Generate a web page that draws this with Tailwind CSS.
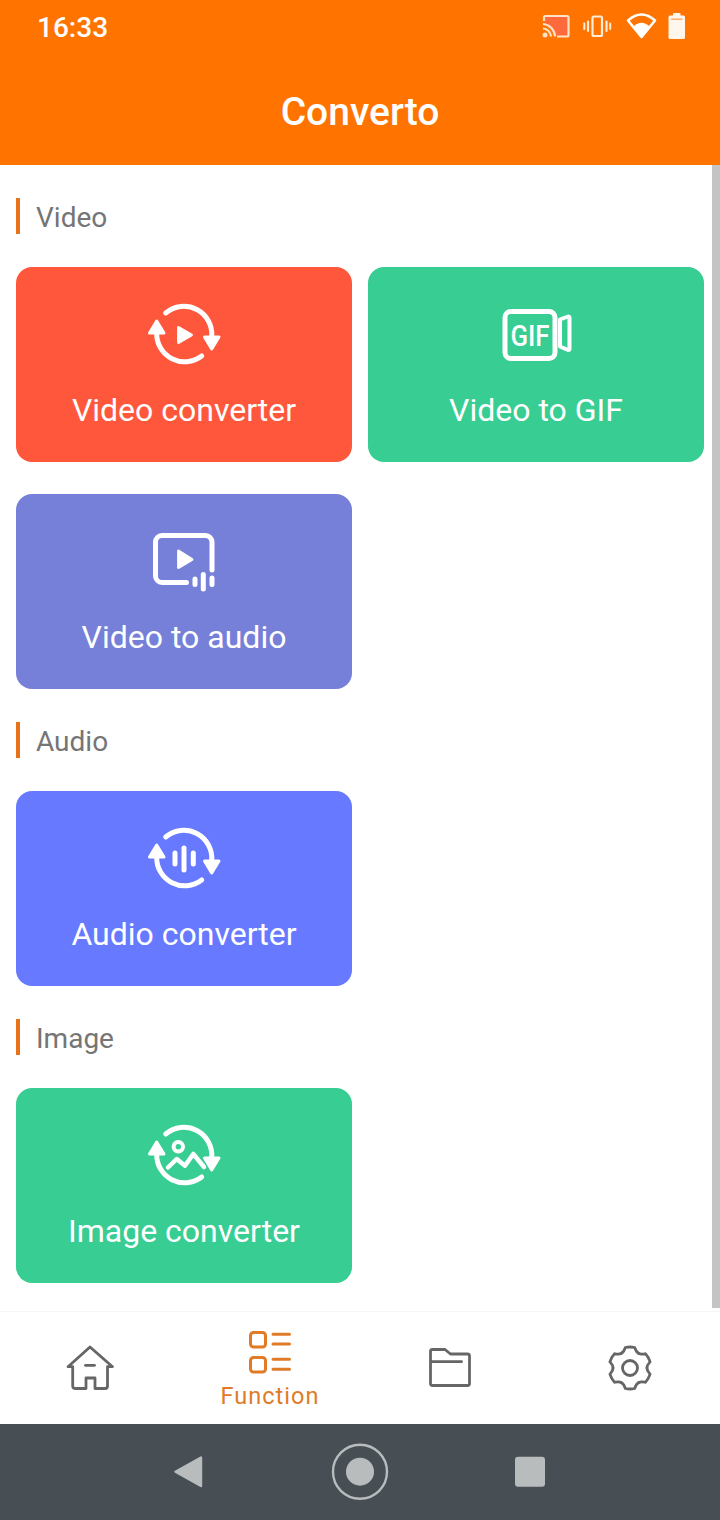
<!DOCTYPE html>
<html lang="en">
<head>
  <meta charset="UTF-8" />
  <title>Converto</title>
  <script src="https://cdn.jsdelivr.net/npm/@tailwindcss/browser@4"></script>
</head>
<body class="bg-white font-[Roboto,sans-serif]">
  <svg class="hidden" width="0" height="0">
    <defs>
      <!-- two arrows shared by the converter cards -->
      <symbol id="cycle" viewBox="0 0 80 80">
        <path d="M21.7 18A28 28 0 0 1 67.7 42" fill="none" stroke="white" stroke-width="5" stroke-linecap="round"/>
        <path d="M12.7 38A28 28 0 0 0 57.7 61" fill="none" stroke="white" stroke-width="5" stroke-linecap="round"/>
        <path d="M5.5 38 12.700 26 20 38Z" fill="white" stroke="white" stroke-width="3" stroke-linejoin="round"/>
        <path d="M60.5 42 67.7 54 75 42Z" fill="white" stroke="white" stroke-width="3" stroke-linejoin="round"/>
      </symbol>
    </defs>
  </svg>

  <div class="relative w-[720px] h-[1520px] flex flex-col overflow-hidden">
    <!-- header -->
    <header class="h-[165px] bg-[#ff7300] text-white shrink-0 flex flex-col">
      <div class="h-[54px] pl-[37px] pr-[35px] flex items-center justify-between">
        <span class="text-[28px] leading-none font-medium mt-px">16:33</span>
        <svg width="150" height="54" viewBox="535 0 150 54" class="-mt-[1px]">
          <!-- cast -->
          <path d="M544 21V17.5A1.5 1.5 0 0 1 545.5 16H567A1.5 1.5 0 0 1 568.5 17.5V35A1.5 1.5 0 0 1 567 36.5H557" fill="#ff6a3c" stroke="#ffe3c8" stroke-width="2.2"/>
          <path d="M543 24A13 13 0 0 1 555 36.5M543 28.5A8.5 8.5 0 0 1 551 36.5" fill="none" stroke="#ffe3c8" stroke-width="2.2"/>
          <circle cx="545" cy="35" r="2.5" fill="#ffe3c8"/>
          <!-- vibrate -->
          <rect x="592.5" y="16.5" width="9.5" height="19.5" rx="1.5" fill="none" stroke="#ffedd8" stroke-width="2.2"/>
          <path d="M588 21.5V31M606.5 21.5V31" stroke="#ffedd8" stroke-width="2.2" stroke-linecap="round"/>
          <path d="M584.3 23.5V29M610.2 23.5V29" stroke="#ffedd8" stroke-width="2" stroke-linecap="round"/>
          <!-- wifi -->
          <path d="M628 20.5Q641.5 8.5 655 20.5L641.5 37Z" fill="none" stroke="white" stroke-width="2.6" stroke-linejoin="round"/>
          <path d="M633.5 26.5Q641.5 19 649.5 26.5L641.5 37Z" fill="white"/>
          <!-- battery -->
          <path d="M673 14.500A1 1 0 0 1 674 13H679.5A1 1 0 0 1 680.5 14.5V15.5H683.5A1.5 1.5 0 0 1 685 17V37.5A1.5 1.5 0 0 1 683.5 39H670A1.5 1.5 0 0 1 668.5 37.5V17A1.5 1.5 0 0 1 670 15.5H673Z" fill="#fff6ec"/>
          <rect x="671" y="18.5" width="11.5" height="1.5" fill="#ffb06e"/>
        </svg>
      </div>
      <h1 class="mt-[35px] text-center text-[39px] leading-[46px] font-medium">Converto</h1>
    </header>

    <!-- content -->
    <main class="flex-1 px-4 min-h-0">
      <section class="pt-[33px]">
        <div class="h-9 border-l-4 border-[#e8721c] pl-4 pt-1 flex items-center text-[#757575] text-[28px]">Video</div>
        <div class="mt-[33px] grid grid-cols-2 gap-x-4 gap-y-8">
          <a class="h-[195px] rounded-2xl bg-[#ff573b] flex flex-col items-center text-white pt-7">
            <svg width="80" height="80" viewBox="0 0 80 80">
              <use href="#cycle"/>
              <path d="M34.5 32.5 47.5 40 34.5 47.5Z" fill="white" stroke="white" stroke-width="2.8" stroke-linejoin="round"/>
            </svg>
            <span class="mt-[16px] text-[32px] leading-[38px]">Video converter</span>
          </a>
          <a class="h-[195px] rounded-2xl bg-[#38cd93] flex flex-col items-center text-white pt-7">
            <svg width="80" height="80" viewBox="0 0 80 80">
              <rect x="9" y="16.5" width="50" height="47" rx="6" fill="none" stroke="white" stroke-width="5"/>
              <path d="M64 24.5 72 21.5Q73.5 21.5 73.5 23V53.5Q73.500 55 72 55L64 51.5Z" fill="none" stroke="white" stroke-width="4" stroke-linejoin="round"/>
              <text x="34" y="50.500" fill="white" font-size="29" font-weight="500" text-anchor="middle" textLength="39" lengthAdjust="spacingAndGlyphs">GIF</text>
            </svg>
            <span class="mt-[16px] text-[32px] leading-[38px]">Video to GIF</span>
          </a>
          <a class="h-[195px] rounded-2xl bg-[#7680d9] flex flex-col items-center text-white pt-7">
            <svg width="80" height="80" viewBox="0 0 80 80">
              <path d="M42.5 60.5H18A6.5 6.5 0 0 1 11.5 54V20A6.5 6.5 0 0 1 18 13.5H61.500A6.5 6.5 0 0 1 68 20V48" fill="none" stroke="white" stroke-width="5" stroke-linecap="round"/>
              <path d="M34.5 29 48 37.5 34.5 45.5Z" fill="white" stroke="white" stroke-width="2.8" stroke-linejoin="round"/>
              <path d="M51 57V62.5M59.3 52.5V67M68 56V62.5" stroke="white" stroke-width="5" stroke-linecap="round"/>
            </svg>
            <span class="mt-[16px] text-[32px] leading-[38px]">Video to audio</span>
          </a>
        </div>
      </section>

      <section class="pt-[33px]">
        <div class="h-9 border-l-4 border-[#e8721c] pl-4 pt-1 flex items-center text-[#757575] text-[28px]">Audio</div>
        <div class="mt-[33px] grid grid-cols-2 gap-x-4">
          <a class="h-[195px] rounded-2xl bg-[#6679ff] flex flex-col items-center text-white pt-7">
            <svg width="80" height="80" viewBox="0 0 80 80">
              <use href="#cycle"/>
              <path d="M31 34V45M40 29V51M49.3 34V45" stroke="white" stroke-width="5" stroke-linecap="round"/>
            </svg>
            <span class="mt-[16px] text-[32px] leading-[38px]">Audio converter</span>
          </a>
        </div>
      </section>

      <section class="pt-[33px]">
        <div class="h-9 border-l-4 border-[#e8721c] pl-4 pt-1 flex items-center text-[#757575] text-[28px]">Image</div>
        <div class="mt-[33px] grid grid-cols-2 gap-x-4">
          <a class="h-[195px] rounded-2xl bg-[#38cd93] flex flex-col items-center text-white pt-7">
            <svg width="80" height="80" viewBox="0 0 80 80">
              <use href="#cycle"/>
              <circle cx="34.3" cy="30.7" r="4.7" fill="none" stroke="white" stroke-width="4"/>
              <path d="M24 51.5 32.7 43 41 49.7 49.3 38 60 51" fill="none" stroke="white" stroke-width="4.5" stroke-linecap="round" stroke-linejoin="round"/>
            </svg>
            <span class="mt-[16px] text-[32px] leading-[38px]">Image converter</span>
          </a>
        </div>
      </section>
    </main>

    <!-- scrollbar -->
    <div class="absolute right-0 top-[165px] w-2 h-[1143px] bg-[#c4c4c4]"></div>

    <!-- bottom tabs -->
    <nav class="h-[113px] shrink-0 border-t border-[#f5f5f5] grid grid-cols-4 bg-white">
      <div class="flex items-center justify-center">
        <svg width="48" height="46" viewBox="66 1345 48 46" fill="none" stroke="#666" stroke-width="2.8" stroke-linecap="round" stroke-linejoin="round">
          <path d="M68 1366.7 90 1347 112.5 1366.7H107.5V1386A2.5 2.5 0 0 1 105 1388.5H95V1378H86V1388.5H75A2.5 2.5 0 0 1 72.7 1386V1366.7Z"/>
          <path d="M85.5 1365.3H94.5"/>
        </svg>
      </div>
      <div class="flex flex-col items-center pt-[18px] text-[#e07b27]">
        <svg width="44" height="44" viewBox="248 1330 44 44" fill="none" stroke="#e07b27" stroke-width="3" stroke-linecap="round">
          <rect x="250.5" y="1332.5" width="15" height="14.5" rx="3"/>
          <rect x="250.5" y="1357.5" width="15" height="14.5" rx="3"/>
          <path d="M273 1334.3H289.5M273 1344H289.5M273 1359.3H289.5M273 1369.3H289.5"/>
        </svg>
        <span class="text-[23.5px] leading-[26px] tracking-[1px] mt-[9px]">Function</span>
      </div>
      <div class="flex items-center justify-center">
        <svg width="44" height="42" viewBox="428 1348 44 42" fill="none" stroke="#666" stroke-width="2.8" stroke-linecap="round" stroke-linejoin="round">
          <path d="M430.5 1362.7V1352.5A2 2 0 0 1 432.5 1350.5H445L450.5 1355H467.5A2 2 0 0 1 469.5 1357V1384.5A2 2 0 0 1 467.5 1386.5H432.5A2 2 0 0 1 430.5 1384.5V1362.7H461.5"/>
        </svg>
      </div>
      <div class="flex items-center justify-center">
        <svg width="48" height="48" viewBox="-24 -24 48 48" fill="none" stroke="#666" stroke-width="2.8" stroke-linecap="round" stroke-linejoin="round">
          <g id="gear-tooth"><path d="M-8.5-14.7C-6-16-5.5-18-4.7-20.5Q0-21.5 4.7-20.5C5.5-18 6-16 8.5-14.7"/></g>
          <use href="#gear-tooth" transform="rotate(60)"/>
          <use href="#gear-tooth" transform="rotate(120)"/>
          <use href="#gear-tooth" transform="rotate(180)"/>
          <use href="#gear-tooth" transform="rotate(240)"/>
          <use href="#gear-tooth" transform="rotate(300)"/>
          <circle r="7.5"/>
        </svg>
      </div>
    </nav>

    <!-- system nav -->
    <div class="h-24 shrink-0 bg-[#474f55] flex items-center justify-center">
      <svg width="720" height="96" viewBox="0 1424 720 96">
        <path d="M175.5 1471.7 201 1457.5V1486Z" fill="#b9bcbd" stroke="#b9bcbd" stroke-width="2.4" stroke-linejoin="round"/>
        <circle cx="360" cy="1471.7" r="27" fill="none" stroke="#b9bcbd" stroke-width="2.4"/>
        <circle cx="360" cy="1471.7" r="14" fill="#b9bcbd"/>
        <rect x="515" y="1456.7" width="30" height="30" rx="3" fill="#b9bcbd"/>
      </svg>
    </div>
  </div>
</body>
</html>
